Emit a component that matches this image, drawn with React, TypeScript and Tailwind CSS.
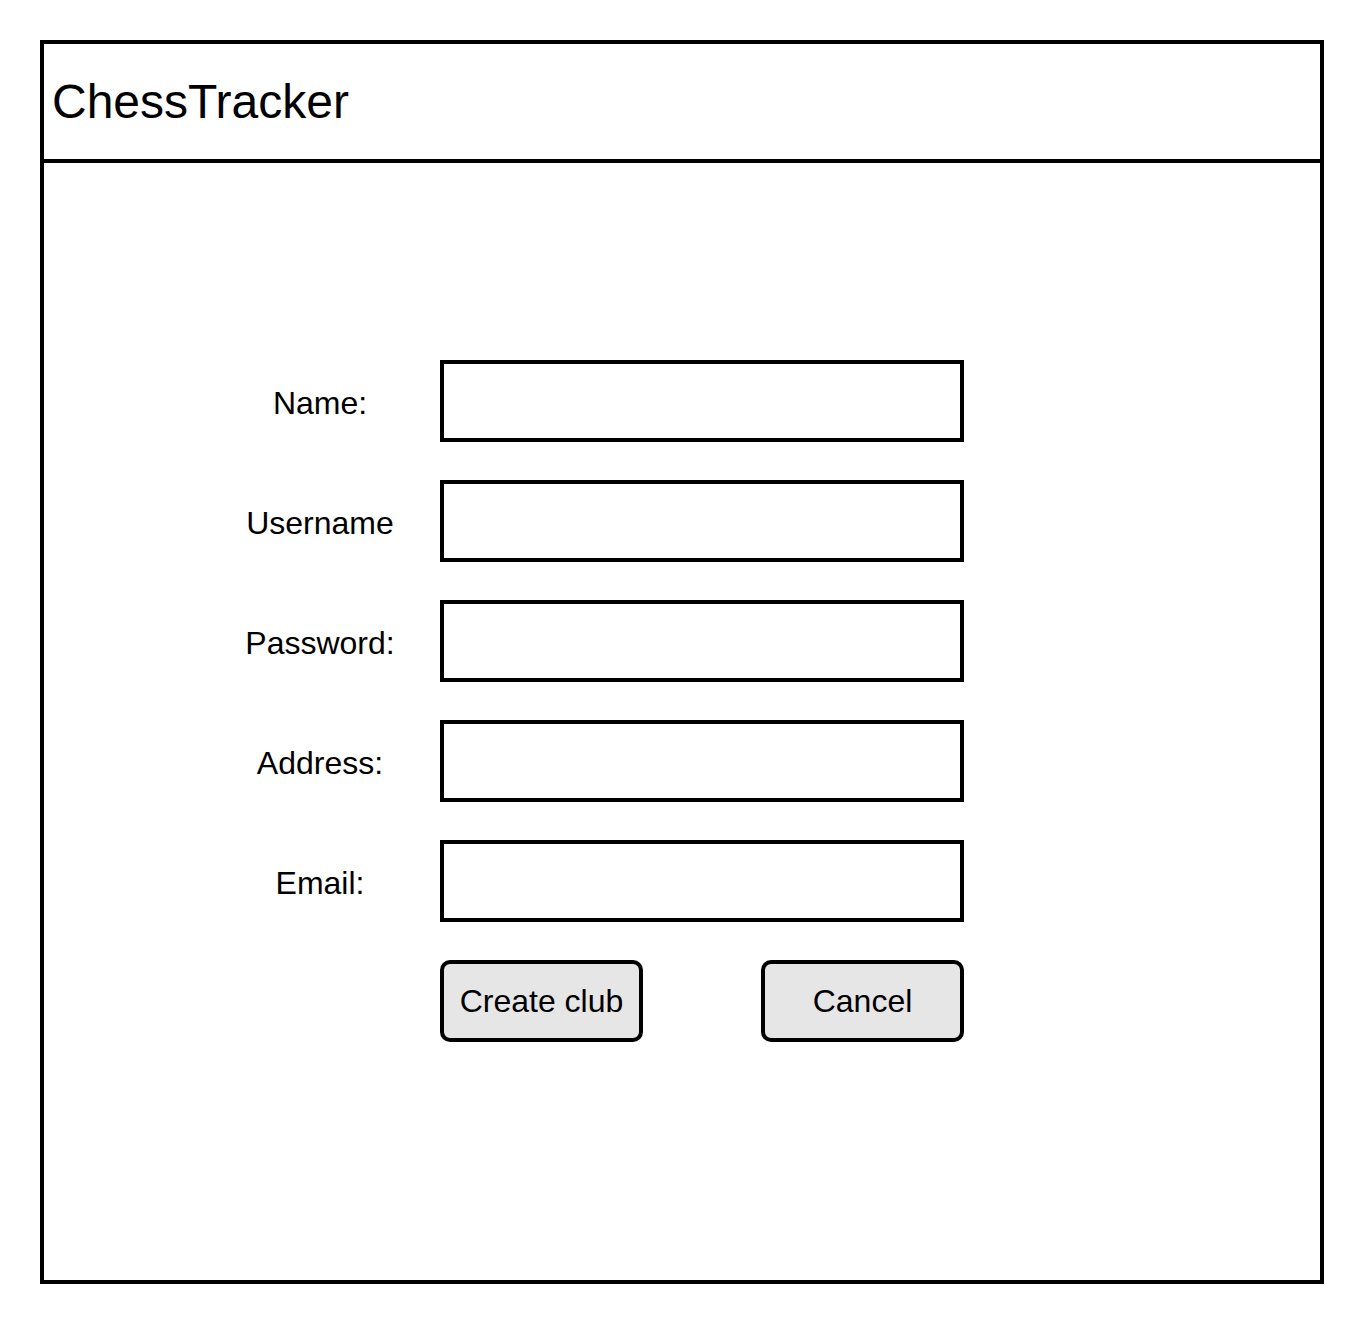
import React from "react";

const fields = ["Name:", "Username", "Password:", "Address:", "Email:"];

export default function App() {
  return (
    <div
      className="min-h-screen bg-white p-[40px] text-black"
      style={{ fontFamily: '"Liberation Sans", Arial, sans-serif' }}
    >
      <div className="flex h-[1244px] w-[1284px] flex-col border-4 border-black">
        {/* Header */}
        <header className="flex h-[119px] shrink-0 items-center border-b-4 border-black pl-[8px]">
          <h1 className="text-[48px] leading-none">ChessTracker</h1>
        </header>

        {/* Form */}
        <main className="flex flex-col gap-[38px] pl-[196px] pt-[197px]">
          {fields.map((label) => (
            <div key={label} className="flex items-center">
              <label className="mt-[3px] w-[160px] text-center text-[32px] leading-none">
                {label}
              </label>
              <input
                type="text"
                className="ml-[40px] h-[82px] w-[524px] border-4 border-black bg-white outline-none"
              />
            </div>
          ))}
          <div className="ml-[200px] flex w-[524px] justify-between">
            <button className="h-[82px] w-[203px] rounded-[10px] border-4 border-black bg-[#e6e6e6] text-[32px] leading-none">
              Create club
            </button>
            <button className="h-[82px] w-[203px] rounded-[10px] border-4 border-black bg-[#e6e6e6] text-[32px] leading-none">
              Cancel
            </button>
          </div>
        </main>
      </div>
    </div>
  );
}
